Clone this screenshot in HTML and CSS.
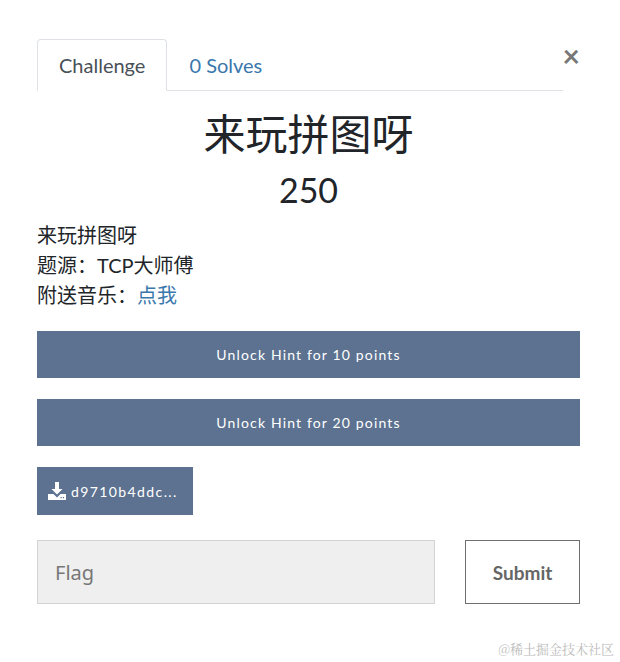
FILE: index.html
```html
<!DOCTYPE html>
<html lang="zh">
<head>
	<meta charset="utf-8">
	<title>来玩拼图呀</title>
	<link rel="stylesheet" href="styles.css">
</head>
<body>

<div class="modal">
	<div class="modal-head">
		<ul class="tabs">
			<li class="tab active">Challenge</li>
			<li class="tab"><a href="#solves">0 Solves</a></li>
		</ul>
		<span class="close">&times;</span>
	</div>

	<h2 class="chal-name">来玩拼图呀</h2>
	<h3 class="chal-value">250</h3>

	<div class="chal-desc">
		<p>来玩拼图呀</p>
		<p>题源：TCP大师傅</p>
		<p>附送音乐：<a href="#music">点我</a></p>
	</div>

	<div class="hints">
		<button class="btn btn-hint">Unlock Hint for 10 points</button>
		<button class="btn btn-hint">Unlock Hint for 20 points</button>
	</div>

	<div class="files">
		<a class="btn btn-file" href="#file">
			<svg width="18" height="18" viewBox="0 0 18 18">
				<path d="M7 0h4v7h3.5L9 12.5 3.5 7H7z" fill="#fff"/>
				<path d="M0 12h5.5l3.5 3.5 3.5-3.5H18v6H0z" fill="#fff"/>
				<rect x="12.5" y="15" width="1.2" height="1.2" fill="#5c7290"/>
				<rect x="14.8" y="15" width="1.2" height="1.2" fill="#5c7290"/>
			</svg>
			d9710b4ddc...
		</a>
	</div>

	<form class="flag-form">
		<input class="flag-input" type="text" placeholder="Flag">
		<button class="btn-submit" type="button">Submit</button>
	</form>
</div>

<div class="watermark">@稀土掘金技术社区</div>

</body>
</html>
```

FILE: styles.css
```css
body {
	margin: 0;
	background: #fff;
	font-family: Lato, "Noto Sans CJK SC", sans-serif;
	color: #212529;
}

.modal {
	padding: 39px 40px 0 37px;
}

.modal-head {
	display: flex;
	align-items: flex-start;
}

.tabs {
	display: flex;
	list-style: none;
	margin: 0;
	padding: 0;
	width: 526px;
	border-bottom: 1px solid #dee2e6;
}

.tab {
	height: 50px;
	line-height: 50px;
	padding: 0 21px;
	font-size: 20px;
	color: #495057;
	margin-bottom: -1px;
	border: 1px solid transparent;
	border-radius: 4px 4px 0 0;
}

.tab.active {
	border-color: #dee2e6 #dee2e6 #fff;
	background: #fff;
}

.tab a {
	color: #3a77ac;
	text-decoration: none;
}

.close {
	margin-left: auto;
	margin-top: 1px;
	font-size: 30px;
	line-height: 30px;
	font-weight: bold;
	color: #777;
}

.chal-name {
	margin: 15px 0 0;
	text-align: center;
	font-size: 42px;
	line-height: 56px;
	font-weight: normal;
}

.chal-value {
	margin: 0;
	text-align: center;
	font-size: 34px;
	line-height: 56px;
	font-weight: normal;
}

.chal-desc {
	margin-top: 2px;
	font-size: 20px;
	line-height: 30px;
}

.chal-desc p {
	margin: 0;
}

.chal-desc a {
	color: #3a77ac;
	text-decoration: none;
}

.hints {
	margin-top: 21px;
	display: flex;
	flex-direction: column;
	gap: 21px;
}

.btn {
	font-family: Lato, sans-serif;
	font-size: 14px;
	letter-spacing: 1.15px;
	color: #fff;
	background: #5c7290;
	border: none;
	text-decoration: none;
}

.btn-hint {
	height: 47px;
	width: 543px;
	padding: 0;
}

.files {
	margin-top: 21px;
}

.btn-file {
	display: inline-flex;
	align-items: center;
	gap: 5px;
	height: 48px;
	padding: 0 15px 0 11px;
	font-size: 14px;
	letter-spacing: 1.4px;
}

.flag-form {
	display: flex;
	justify-content: space-between;
	width: 543px;
	margin-top: 25px;
}

.flag-input {
	box-sizing: border-box;
	width: 398px;
	height: 64px;
	padding: 0 17px;
	background: #efefef;
	border: 1px solid #d3d3d3;
	font-family: "Noto Sans", sans-serif;
	font-size: 20px;
}

.flag-input::placeholder {
	color: #777;
}

.btn-submit {
	box-sizing: border-box;
	width: 115px;
	height: 64px;
	background: #fff;
	border: 1px solid #6f6f6f;
	font-family: Lato, sans-serif;
	font-size: 19px;
	font-weight: bold;
	color: #666;
}

.watermark {
	position: absolute;
	right: 6px;
	top: 639px;
	font-family: "Noto Serif CJK SC", "Noto Sans CJK SC", serif;
	font-size: 13px;
	color: #bbb;
}
```
